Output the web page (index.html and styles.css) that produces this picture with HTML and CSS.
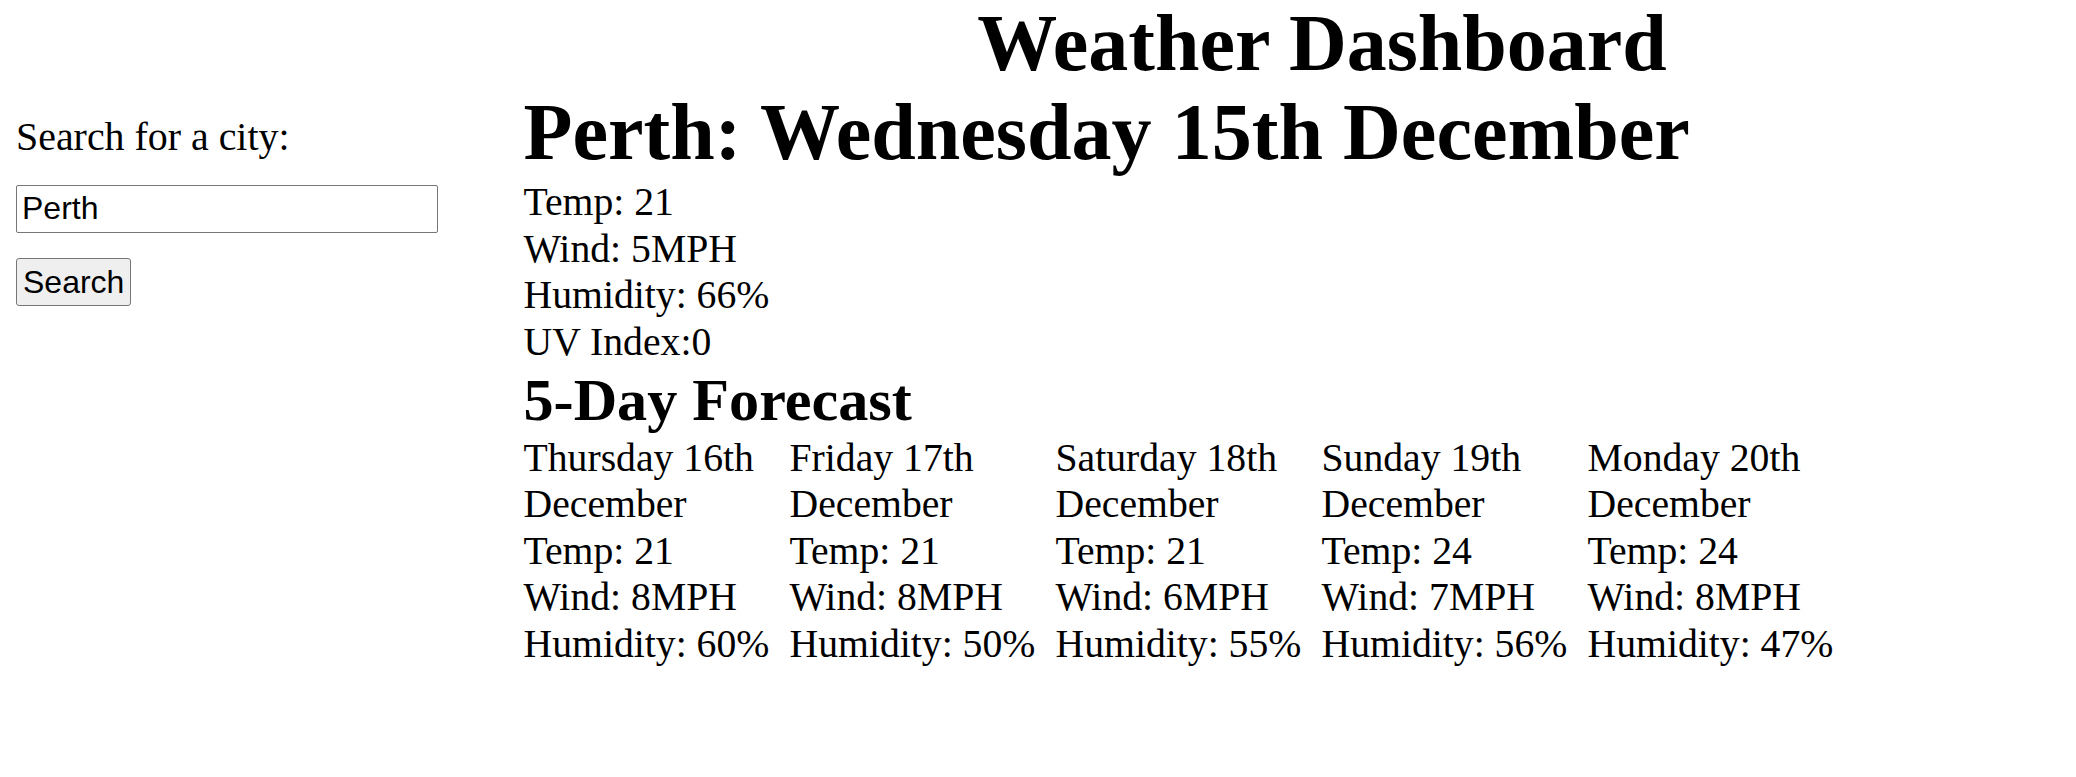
FILE: index.html
```html
<!DOCTYPE html>
<html lang="en">
<head>
<meta charset="utf-8">
<title>Weather Dashboard</title>
<link rel="stylesheet" href="styles.css">
</head>
<body>
  <header class="page-header">
    <h1 class="page-title">Weather Dashboard</h1>
  </header>
  <div class="layout">
    <aside class="sidebar">
      <label class="search-label" for="city">Search for a city:</label>
      <input class="search-input" id="city" type="text" value="Perth">
      <button class="search-button" type="button">Search</button>
    </aside>
    <main class="main">
      <h2 class="current-title">Perth: Wednesday 15th December</h2>
      <div class="current">
        <div class="line">Temp: 21</div>
        <div class="line">Wind: 5MPH</div>
        <div class="line">Humidity: 66%</div>
        <div class="line">UV Index:0</div>
      </div>
      <h3 class="forecast-title">5-Day Forecast</h3>
      <div class="forecast">
        <div class="day">
          <div class="line">Thursday 16th December</div>
          <div class="line">Temp: 21</div>
          <div class="line">Wind: 8MPH</div>
          <div class="line">Humidity: 60%</div>
        </div>
        <div class="day">
          <div class="line">Friday 17th December</div>
          <div class="line">Temp: 21</div>
          <div class="line">Wind: 8MPH</div>
          <div class="line">Humidity: 50%</div>
        </div>
        <div class="day">
          <div class="line">Saturday 18th December</div>
          <div class="line">Temp: 21</div>
          <div class="line">Wind: 6MPH</div>
          <div class="line">Humidity: 55%</div>
        </div>
        <div class="day">
          <div class="line">Sunday 19th December</div>
          <div class="line">Temp: 24</div>
          <div class="line">Wind: 7MPH</div>
          <div class="line">Humidity: 56%</div>
        </div>
        <div class="day">
          <div class="line">Monday 20th December</div>
          <div class="line">Temp: 24</div>
          <div class="line">Wind: 8MPH</div>
          <div class="line">Humidity: 47%</div>
        </div>
      </div>
    </main>
  </div>
</body>
</html>
```
FILE: styles.css
```css
html, body {
  background: #ffffff;
}

body {
  margin: 0;
  padding: 0 16px;
  color: #000000;
  font-family: "Liberation Serif", "Times New Roman", serif;
  font-size: 39.7px;
  line-height: 46.4px;
}

.page-header {
  display: block;
}

.page-title {
  margin: 0 0 0 568px;
  font-size: 80px;
  line-height: 86px;
  font-weight: bold;
  text-align: center;
}

.layout {
  display: flex;
  align-items: flex-start;
}

.sidebar {
  flex: 0 0 507px;
  display: flex;
  flex-direction: column;
  align-items: flex-start;
  padding-top: 28px;
}

.search-label {
  display: block;
  font-size: 39.9px;
  margin-bottom: 24.5px;
}

.search-input {
  box-sizing: border-box;
  width: 422px;
  height: 48px;
  margin: 0 0 25px 0;
  padding: 4px 5px;
  border: 1px solid #767676;
  border-radius: 2px;
  background: #ffffff;
  color: #000000;
  font-family: "Liberation Sans", Arial, sans-serif;
  font-size: 32px;
  line-height: 38px;
}

.search-button {
  box-sizing: border-box;
  height: 48px;
  margin: 0;
  padding: 4px 6px;
  border: 1px solid #767676;
  border-radius: 3px;
  background: #efefef;
  color: #000000;
  font-family: "Liberation Sans", Arial, sans-serif;
  font-size: 32px;
  line-height: 38px;
}

.main {
  flex: 1 1 auto;
  min-width: 0;
  padding-left: 0.5px;
}

.current-title {
  margin: 0;
  font-size: 80.1px;
  line-height: 93.4px;
  font-weight: bold;
  white-space: nowrap;
}

.current {
  display: block;
}

.forecast-title {
  margin: 0;
  font-size: 60.2px;
  line-height: 70px;
  font-weight: bold;
}

.forecast {
  display: flex;
}

.day {
  flex: 0 0 266px;
  width: 266px;
}
```
